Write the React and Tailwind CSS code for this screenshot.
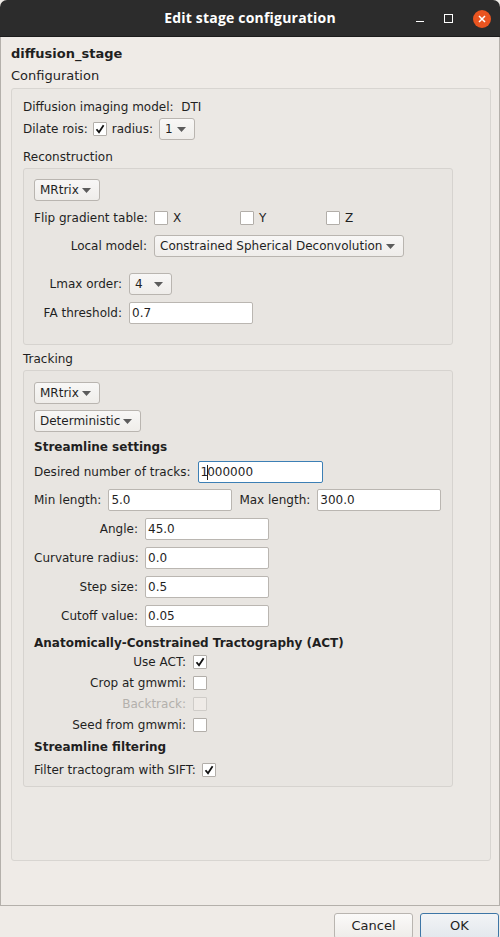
import React from 'react';

const FONT = { fontFamily: '"DejaVu Sans", "Noto Sans", sans-serif' };

const Combo = ({ w, children }) => (
    <div
        className={`${w} h-[22px] flex items-center justify-between pl-[5px] pr-[8px] border border-[#b9b5b0] rounded-[3px] bg-gradient-to-b from-[#f8f7f6] to-[#efedea] text-[#1f1f1f]`}
    >
        <span>{children}</span>
        <svg width="9" height="5" viewBox="0 0 9 5"><path d="M0 0 H9 L4.5 5 Z" fill="#5c5c5c" /></svg>
    </div>
);

const Field = ({ w = 'w-[124px]', value, focus }) => (
    <div
        className={`${w} h-[22px] flex items-center pl-[2px] bg-white rounded-[2px] border ${
            focus ? 'border-[#3c7fb5]' : 'border-[#bab6b1]'
        } text-[#1f1f1f]`}
    >
        {focus ? (
            <span className="flex items-center">
                1<span className="inline-block w-px h-[15px] bg-[#1f1f1f] -mx-px" />000000
            </span>
        ) : (
            value
        )}
    </div>
);

const Check = ({ checked, disabled }) => (
    <div
        className={`w-[14px] h-[14px] flex items-center justify-center rounded-[1px] border ${
            disabled ? 'border-[#cfccc8] bg-[#efebe7]' : 'border-[#b2aea9] bg-white'
        }`}
    >
        {checked && (
            <svg width="10" height="10" viewBox="0 0 10 10">
                <path d="M1.5 5.2 L4 8.3 L8.6 1.2" fill="none" stroke="#111" strokeWidth="1.8" />
            </svg>
        )}
    </div>
);

const FormRow = ({ label, labelW, gap = 'gap-[7px]', children, muted, className = '' }) => (
    <div className={`flex items-center ${gap} ${className}`}>
        <span className={`${labelW} text-right whitespace-nowrap ${muted ? 'text-[#b3b0ac]' : ''}`}>{label}</span>
        {children}
    </div>
);

export default function App() {
    return (
        <div className="w-[500px] h-[937px] bg-[#efebe7] text-[12px] leading-[16px] text-[#1f1f1f] flex flex-col overflow-hidden" style={FONT}>
            {/* Title bar */}
            <div className="h-[37px] shrink-0 bg-[#2c2c2c] rounded-t-[7px] border-b border-[#1c1c1c] flex items-center relative">
                <div className="flex-1 text-center text-white font-bold text-[14px] tracking-[0.2px]" style={{ fontFamily: '"Open Sans", "DejaVu Sans", sans-serif' }}>
                    Edit stage configuration
                </div>
                <div className="absolute right-[9px] top-0 h-[37px] flex items-center gap-[20px]">
                    <div className="w-[8px] h-px bg-white mt-[6px]" />
                    <div className="w-[9px] h-[9px] border border-white" />
                    <div className="w-[18px] h-[18px] rounded-full bg-[#e95420] flex items-center justify-center">
                        <svg width="8" height="8" viewBox="0 0 8 8"><path d="M1 1 L7 7 M7 1 L1 7" stroke="white" strokeWidth="1.5" /></svg>
                    </div>
                </div>
            </div>

            {/* Scroll area */}
            <div className="h-[869px] shrink-0 border-l border-r border-b border-[#b4b0ab] flex flex-col">
                <div className="pl-[10px] pt-[10px] font-bold text-[13px] leading-[14px]">diffusion_stage</div>
                <div className="pl-[10px] pt-[8px] leading-[14px] text-[13px]">Configuration</div>

                <div className="ml-[10px] mt-[5px] w-[480px] h-[773px] border border-[#d8d5d1] rounded-[3px] bg-[#ebe8e4] flex flex-col pl-[11px]">
                    <div className="mt-[11px] h-[14px] leading-[14px]">Diffusion imaging model:&nbsp; DTI</div>
                    <div className="mt-[4px] flex items-center h-[22px]">
                        <span>Dilate rois:</span>
                        <div className="ml-[5px]"><Check checked /></div>
                        <span className="ml-[5px]">radius:</span>
                        <div className="ml-[6px]"><Combo w="w-[36px]">1</Combo></div>
                    </div>

                    {/* Reconstruction */}
                    <div className="mt-[10px] h-[14px] leading-[14px]">Reconstruction</div>
                    <div className="mt-[4px] w-[430px] h-[177px] border border-[#d6d3cf] rounded-[3px] bg-[#e8e5e1] flex flex-col pl-[10px] pt-[10px]">
                        <Combo w="w-[66px]">MRtrix</Combo>
                        <div className="mt-[9px] flex items-center h-[16px]">
                            <span className="w-[120px]">Flip gradient table:</span>
                            <Check />
                            <span className="ml-[5px] w-[67px]">X</span>
                            <Check />
                            <span className="ml-[5px] w-[67px]">Y</span>
                            <Check />
                            <span className="ml-[5px]">Z</span>
                        </div>
                        <FormRow label="Local model:" labelW="w-[113px]" className="mt-[9px]">
                            <Combo w="w-[250px]">Constrained Spherical Deconvolution</Combo>
                        </FormRow>
                        <FormRow label="Lmax order:" labelW="w-[88px]" className="mt-[16px]">
                            <Combo w="w-[43px]">4</Combo>
                        </FormRow>
                        <FormRow label="FA threshold:" labelW="w-[88px]" className="mt-[7px]">
                            <Field value="0.7" w="w-[124px]" />
                        </FormRow>
                    </div>

                    {/* Tracking */}
                    <div className="mt-[7px] h-[14px] leading-[14px]">Tracking</div>
                    <div className="mt-[4px] w-[430px] h-[417px] border border-[#d6d3cf] rounded-[3px] bg-[#e8e5e1] flex flex-col pl-[10px] pt-[11px]">
                        <Combo w="w-[66px]">MRtrix</Combo>
                        <div className="mt-[6px]"><Combo w="w-[107px]">Deterministic</Combo></div>
                        <div className="mt-[7px] font-bold h-[16px]">Streamline settings</div>
                        <FormRow label="Desired number of tracks:" labelW="w-auto" className="mt-[6px]">
                            <Field focus w="w-[125px]" />
                        </FormRow>
                        <div className="mt-[6px] flex items-center">
                            <span>Min length:</span>
                            <div className="ml-[7px]"><Field value="5.0" /></div>
                            <span className="ml-[7px]">Max length:</span>
                            <div className="ml-[7px]"><Field value="300.0" /></div>
                        </div>
                        <div className="mt-[7px] flex flex-col gap-[7px]">
                            <FormRow label="Angle:" labelW="w-[104px]"><Field value="45.0" /></FormRow>
                            <FormRow label="Curvature radius:" labelW="w-[104px]"><Field value="0.0" /></FormRow>
                            <FormRow label="Step size:" labelW="w-[104px]"><Field value="0.5" /></FormRow>
                            <FormRow label="Cutoff value:" labelW="w-[104px]"><Field value="0.05" /></FormRow>
                        </div>
                        <div className="mt-[8px] font-bold h-[16px]">Anatomically-Constrained Tractography (ACT)</div>
                        <div className="mt-[3px] flex flex-col gap-[5px]">
                            <FormRow label="Use ACT:" labelW="w-[152px]"><Check checked /></FormRow>
                            <FormRow label="Crop at gmwmi:" labelW="w-[152px]"><Check /></FormRow>
                            <FormRow label="Backtrack:" labelW="w-[152px]" muted><Check disabled /></FormRow>
                            <FormRow label="Seed from gmwmi:" labelW="w-[152px]"><Check /></FormRow>
                        </div>
                        <div className="mt-[6px] font-bold h-[16px]">Streamline filtering</div>
                        <FormRow label="Filter tractogram with SIFT:" labelW="w-auto" gap="gap-[6px]" className="mt-[7px]">
                            <Check checked />
                        </FormRow>
                    </div>
                </div>
            </div>

            {/* Buttons */}
            <div className="flex justify-end gap-[7px] pt-[7px] pr-px">
                <div className="w-[79px] h-[26px] flex items-center justify-center border border-[#b9b5b0] rounded-[3px] bg-gradient-to-b from-[#fbfaf9] to-[#eeece9] text-[13px]">
                    Cancel
                </div>
                <div className="w-[79px] h-[26px] flex items-center justify-center border border-[#3e76a6] rounded-[3px] bg-gradient-to-b from-[#f2f4f6] to-[#e3e8ed] text-[13px]">
                    OK
                </div>
            </div>
        </div>
    );
}
